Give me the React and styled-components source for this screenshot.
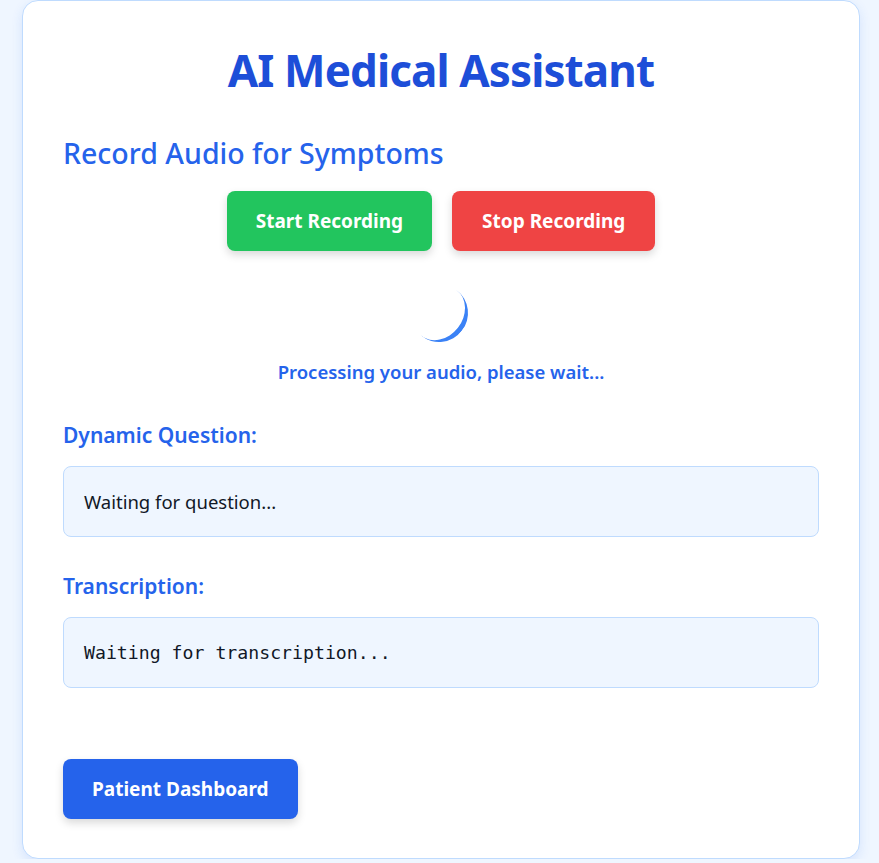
import styled, { createGlobalStyle } from 'styled-components';

const GlobalStyle = createGlobalStyle`
    html, body {
        margin: 0;
        padding: 0;
        background-color: #eff6ff;
        font-family: 'Noto Sans', 'Open Sans', sans-serif;
    }
`;

const Page = styled.div`
    display: flex;
    padding-left: 22px;
`;

const Card = styled.main`
    display: flex;
    flex-direction: column;
    width: 838px;
    padding: 30px 40px 39px;
    box-sizing: border-box;
    background-color: #ffffff;
    border: 1px solid #bfdbfe;
    border-radius: 16px;
    box-shadow: 0 4px 12px rgba(37, 99, 235, 0.12);
`;

const Title = styled.h1`
    margin: 0;
    font-size: 44px;
    font-weight: 700;
    line-height: 78px;
    text-align: center;
    color: #1d4ed8;
    letter-spacing: -0.9px;
`;

const SectionTitle = styled.h2`
    margin: 22px 0 0;
    font-size: 28.5px;
    font-weight: 500;
    line-height: 44px;
    color: #2563eb;
`;

const ButtonRow = styled.div`
    display: flex;
    justify-content: center;
    gap: 20px;
    margin-top: 16px;
`;

const ActionButton = styled.button`
    height: 60px;
    padding: 0 ${({ $px }) => $px}px;
    border: none;
    border-radius: 8px;
    background-color: ${({ $color }) => $color};
    color: #ffffff;
    font-family: inherit;
    font-size: 19px;
    font-weight: 700;
    box-shadow: 0 4px 8px rgba(0, 0, 0, 0.15);
    cursor: pointer;
`;

const SpinnerWrap = styled.div`
    display: flex;
    justify-content: center;
    margin-top: 33px;
    padding-right: 4px;
`;

const Spinner = styled.div`
    width: 58px;
    height: 58px;
    box-sizing: border-box;
    border-top: 5px solid #3b82f6;
    border-radius: 50%;
    transform: rotate(128deg);
`;

const Status = styled.p`
    margin: 17px 0 0;
    font-size: 18.5px;
    font-weight: 600;
    line-height: 26px;
    text-align: center;
    color: #2563eb;
`;

const Label = styled.h3`
    margin: ${({ $mt }) => $mt}px 0 0;
    font-size: 21px;
    font-weight: 600;
    line-height: 30px;
    color: #2563eb;
`;

const OutputBox = styled.div`
    display: flex;
    align-items: center;
    height: 71px;
    margin-top: 16px;
    padding: 0 20px;
    box-sizing: border-box;
    background-color: #eff6ff;
    border: 1px solid #bfdbfe;
    border-radius: 8px;
    font-family: ${({ $mono }) => ($mono ? "'DejaVu Sans Mono', 'Liberation Mono', monospace" : 'inherit')};
    font-size: ${({ $mono }) => ($mono ? 18.2 : 18.5)}px;
    color: #111827;
`;

const DashboardButton = styled(ActionButton)`
    align-self: flex-start;
    margin-top: 71px;
`;

export default function App() {
    return (
        <>
            <GlobalStyle />
            <Page>
                <Card>
                    <Title>AI Medical Assistant</Title>
                    <SectionTitle>Record Audio for Symptoms</SectionTitle>
                    <ButtonRow>
                        <ActionButton $color="#22c55e" $px={29}>Start Recording</ActionButton>
                        <ActionButton $color="#ef4444" $px={30}>Stop Recording</ActionButton>
                    </ButtonRow>
                    <SpinnerWrap>
                        <Spinner />
                    </SpinnerWrap>
                    <Status>Processing your audio, please wait...</Status>
                    <Label $mt={35}>Dynamic Question:</Label>
                    <OutputBox>Waiting for question...</OutputBox>
                    <Label $mt={34}>Transcription:</Label>
                    <OutputBox $mono>Waiting for transcription...</OutputBox>
                    <DashboardButton $color="#2563eb" $px={29}>Patient Dashboard</DashboardButton>
                </Card>
            </Page>
        </>
    );
}
